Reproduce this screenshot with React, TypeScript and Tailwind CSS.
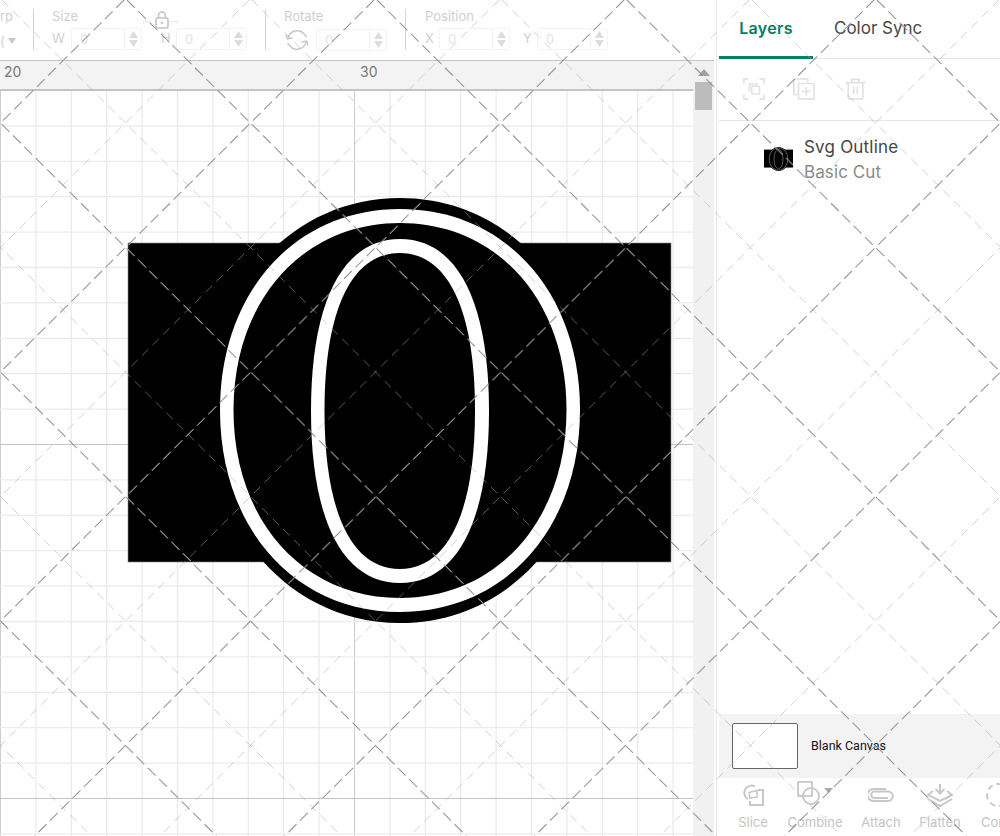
import React from "react";

function egg(l: number, t: number, r: number, b: number, k: number, my?: number) {
  const cx = (l + r) / 2;
  const cy = my ?? (t + b) / 2;
  const rx = (r - l) / 2;
  const up = cy - t;
  const dn = b - cy;
  return `M${cx} ${t}C${cx + rx * k} ${t} ${r} ${cy - up * k} ${r} ${cy}C${r} ${cy + dn * k} ${cx + rx * k} ${b} ${cx} ${b}C${cx - rx * k} ${b} ${l} ${cy + dn * k} ${l} ${cy}C${l} ${cy - up * k} ${cx - rx * k} ${t} ${cx} ${t}Z`;
}

function Logo() {
  return (
    <g>
      <rect x="128" y="243" width="543" height="319" fill="#000" stroke="#888" strokeWidth="0.6" />
      <path d={egg(209, 198, 591, 623, 0.57)} fill="#000" />
      <path d={egg(220, 209, 580, 612, 0.585, 410)} fill="#fff" />
      <path d={egg(233.5, 223, 566.5, 598, 0.585, 410)} fill="#000" />
      <path d={egg(311, 239, 489, 583, 0.64, 411)} fill="#fff" />
      <path d={egg(324.5, 253, 475, 569, 0.64, 411)} fill="#000" />
    </g>
  );
}

function ThumbLogo() {
  return (
    <g>
      <rect x="128" y="243" width="543" height="319" fill="#000" />
      <path d={egg(209, 198, 591, 623, 0.57)} fill="#000" />
      <path d={egg(227, 216, 573, 605, 0.59, 410)} fill="none" stroke="#666" strokeWidth="16" />
      <path d={egg(318, 246, 482, 576, 0.64, 411)} fill="none" stroke="#666" strokeWidth="16" />
    </g>
  );
}

function Grid() {
  const step = 35.4;
  const vs = Array.from({ length: 21 }, (_, i) => i * step);
  const hs = Array.from({ length: 22 }, (_, i) => 90 + i * step);
  return (
    <g>
      {vs.map((x, i) => (
        <line key={i} x1={x + 0.5} x2={x + 0.5} y1="90" y2="836" stroke={i % 10 === 0 ? "#cdcdcd" : "#ebebeb"} strokeWidth={i % 10 === 0 ? 1 : 1.3} />
      ))}
      {hs.map((y, i) => (
        <line key={i} x1="0" x2="693" y1={y + 0.5} y2={y + 0.5} stroke={i % 10 === 0 ? "#c4c4c4" : "#ebebeb"} strokeWidth={i % 10 === 0 ? 1 : 1.3} />
      ))}
    </g>
  );
}

function Watermark() {
  const H = 836;
  const S = 1.004;
  const lines: { x1: number; x2: number; dark: boolean }[] = [];
  Array.from({ length: 18 }, (_, i) => i - 8).forEach((k) => {
    lines.push({ x1: 127 + 125 * k, x2: 127 + 125 * k + H * S, dark: k % 2 === 0 });
  });
  Array.from({ length: 18 }, (_, i) => i).forEach((k) => {
    lines.push({ x1: 124 + 125 * k, x2: 124 + 125 * k - H * S, dark: k % 2 === 0 });
  });
  return (
    <svg className="absolute inset-0 pointer-events-none" width="1000" height="836" viewBox="0 0 1000 836">
      {lines.map((l, i) => (
        <g key={i} strokeDasharray={l.dark ? "11 5" : "9 6"} fill="none">
          {l.dark && <line x1={l.x1 + 0.7} x2={l.x2 + 0.7} y1="0" y2={H} stroke="#fff" strokeOpacity="0.8" strokeWidth="0.8" />}
          <line x1={l.x1} x2={l.x2} y1="0" y2={H} stroke={l.dark ? "#777" : "#aaa"} strokeOpacity={l.dark ? 0.75 : 0.6} strokeWidth={l.dark ? 1.1 : 0.9} />
        </g>
      ))}
    </svg>
  );
}

function Stepper() {
  return (
    <span className="flex h-full w-[17px] flex-col items-center justify-center gap-[2px] border-l border-[#f0f0f0]">
      <svg width="9" height="7" viewBox="0 0 9 7"><path d="M4.5 0L9 7H0Z" fill="#dcdcdc" /></svg>
      <svg width="9" height="7" viewBox="0 0 9 7"><path d="M4.5 7L9 0H0Z" fill="#dcdcdc" /></svg>
    </span>
  );
}

function NumInput() {
  return (
    <div className="flex h-[22px] w-[71px] items-center justify-between rounded-[3px] border border-[#f3f3f3] bg-white">
      <span className="pl-2 text-[13px] leading-none text-[#e4e4e4]">0</span>
      <Stepper />
    </div>
  );
}

function Label({ children, w }: { children: React.ReactNode; w: string }) {
  return <span className={`${w} text-[13px] leading-none text-[#cfcfcf]`}>{children}</span>;
}

function Toolbar() {
  return (
    <div className="flex h-[60px] items-start bg-white pt-[9px] font-[Inter,sans-serif]">
      <div className="flex h-[41px] w-[34px] flex-col border-r border-[#d4d4d4]">
        <span className="text-[13px] leading-[14px] text-[#cfcfcf]">rp</span>
        <span className="mt-[11px] flex h-[14px] items-center text-[13px] leading-none text-[#cfcfcf]">
          <span className="w-[8px]">(</span>
          <svg width="8" height="6" viewBox="0 0 8 6"><path d="M0 0H8L4 6Z" fill="#c8c8c8" /></svg>
        </span>
      </div>
      <div className="h-[41px] w-[232px] border-r border-[#d4d4d4] pl-[18px]">
        <div className="flex h-[18px] items-start">
          <span className="w-[91px] text-[13px] leading-[14px] text-[#cfcfcf]">Size</span>
          <svg width="35" height="20" viewBox="0 0 35 20" className="mt-[1px]" fill="none">
            <path d="M0.5 14V11.5H7M27 11.5H34.5V14" stroke="#e8e8e8" />
            <rect x="13" y="8" width="12" height="10" rx="1.5" stroke="#c4c4c4" strokeWidth="1.6" />
            <path d="M15.5 8V5.5a3.5 3.5 0 017 0V8" stroke="#c4c4c4" strokeWidth="1.6" />
            <circle cx="19" cy="13" r="1.3" fill="#c4c4c4" />
          </svg>
        </div>
        <div className="mt-[1px] flex items-center">
          <Label w="w-[19px] -translate-y-px">W</Label>
          <NumInput />
          <span className="w-[19px]" />
          <Label w="w-[15px] -translate-y-px">H</Label>
          <NumInput />
        </div>
      </div>
      <div className="h-[41px] w-[140px] border-r border-[#d4d4d4] pl-[18px]">
        <div className="h-[19px] text-[13px] leading-[14px] text-[#cfcfcf]">Rotate</div>
        <div className="flex items-center">
          <svg width="24" height="24" viewBox="0 0 24 24" className="ml-[1px] mr-[7px]" fill="none" stroke="#c8c8c8" strokeWidth="1.5">
            <path d="M3 10.5A9.2 9.2 0 0119.5 6.5L21.5 9" />
            <path d="M21 13.5A9.2 9.2 0 014.5 17.5L2.5 15" />
            <path d="M1 6.5L2.5 11L7.5 10M23 17.5L21.5 13L16.5 14" />
          </svg>
          <NumInput />
        </div>
      </div>
      <div className="h-[41px] pl-[19px]">
        <div className="h-[19px] text-[13px] leading-[14px] text-[#cfcfcf]">Position</div>
        <div className="flex items-center">
          <Label w="w-[14px] -translate-y-px">X</Label>
          <NumInput />
          <span className="w-[13px]" />
          <Label w="w-[14px] -translate-y-px">Y</Label>
          <NumInput />
        </div>
      </div>
    </div>
  );
}

function Ruler() {
  return (
    <div className="flex h-[30px] w-[693px] border-y border-y-[#c4c4c4] bg-[#f3f3f3] font-[Inter,sans-serif] text-[14px] leading-[20px] text-[#777]">
      <span className="ml-[4px] w-[356px] pt-[1px]">20</span>
      <span className="pt-[1px]">30</span>
    </div>
  );
}

function Scrollbar() {
  return (
    <div className="flex w-[21px] flex-col items-center border-t border-[#c4c4c4] bg-[#f1f1f1]">
      <svg width="12" height="7" viewBox="0 0 12 7" className="mt-[8px]"><path d="M6 0L12 7H0Z" fill="#a0a0a0" /></svg>
      <div className="mt-[6px] h-[28px] w-[17px] bg-[#bcbcbc]" />
    </div>
  );
}

function SideIcons() {
  const c = "#e2e2e2";
  return (
    <div className="flex h-[62px] items-start border-b border-[#e6e6e6] pt-[19px] pl-[24px]">
      <svg width="22" height="22" viewBox="0 0 24 24" fill="none" stroke={c} strokeWidth="1.8" className="mr-[28px]">
        <path d="M1 6V1H6M18 1H23V6M23 18V23H18M6 23H1V18" />
        <path d="M7 15V6.5H15V9" />
        <rect x="9.5" y="9" width="8.5" height="8.5" rx="1.5" />
      </svg>
      <svg width="22" height="22" viewBox="0 0 24 24" fill="none" stroke={c} strokeWidth="1.8" className="mr-[30px]">
        <path d="M5 18H1V1H16V5" />
        <rect x="6" y="6" width="17" height="17" rx="1" />
        <path d="M14.5 10V19M10 14.5H19" />
      </svg>
      <svg width="21" height="22" viewBox="0 0 22 24" fill="none" stroke={c} strokeWidth="1.8">
        <path d="M3 5V21a2 2 0 002 2H17a2 2 0 002-2V5" />
        <path d="M0 5H22M7 5V1.5H15V5" />
        <path d="M9 9V18M13 9V18" />
      </svg>
    </div>
  );
}

function BottomTool({ label, icon, w }: { label: string; icon: React.ReactNode; w: string }) {
  return (
    <div className={`${w} flex shrink-0 flex-col items-center`}>
      <div className="flex h-[30px] items-center justify-center">{icon}</div>
      <span className="mt-[4px] text-[13px] leading-[16px] whitespace-nowrap text-[#c4c4c4]">{label}</span>
    </div>
  );
}

function Panel() {
  const c = "#c8c8c8";
  return (
    <div className="flex h-[836px] w-[284px] flex-col overflow-hidden border-l border-[#e8e8e8] pl-[2px] font-[Inter,sans-serif]">
      <div className="flex h-[59px] shrink-0 border-b border-[#e4e4e4]">
        <div className="mb-[-1px] flex w-[94px] justify-center border-b-[3px] border-[#00805f] pt-[17px] text-[16px] leading-[22px] font-semibold tracking-[0.3px] text-[#00805f]">Layers</div>
        <div className="ml-[21px] pt-[17px] text-[17px] leading-[22px] text-[#484848]">Color Sync</div>
      </div>
      <SideIcons />
      <div className="flex flex-1 items-start pt-[14px] pl-[45px]">
        <svg width="29" height="24" viewBox="128 197 543 426" className="mt-[12px] mr-[11px]" preserveAspectRatio="none"><ThumbLogo /></svg>
        <div>
          <div className="text-[17px] leading-[25px] tracking-[0.2px] text-[#444]">Svg Outline</div>
          <div className="text-[17px] leading-[24px] tracking-[0.1px] text-[#8a8a8a]">Basic Cut</div>
        </div>
      </div>
      <div className="flex h-[64px] shrink-0 items-center bg-[#f3f3f3] pl-[13px]">
        <div className="h-[46px] w-[66px] rounded-[2px] border border-[#666] bg-white" />
        <span className="ml-[13px] pt-[1px] font-[Roboto,sans-serif] text-[12.5px] text-[#111]">Blank Canvas</span>
      </div>
      <div className="flex h-[58px] shrink-0 pt-[2px] pl-[12px]">
        <BottomTool
          w="w-[44px]"
          label="Slice"
          icon={
            <svg width="26" height="26" viewBox="0 0 26 26" fill="none" stroke={c} strokeWidth="2">
              <path d="M8 17A6.5 6.5 0 1115 4.5" />
              <path d="M9 10.5L17 8.5V15L10 16Z" strokeWidth="1.6" />
              <path d="M18 8H23V23H10V19" />
            </svg>
          }
        />
        <BottomTool
          w="w-[80px]"
          label="Combine"
          icon={
            <svg width="42" height="28" viewBox="0 0 42 28" fill="none" stroke={c} strokeWidth="1.8" className="ml-[6px]">
              <rect x="1" y="1" width="14" height="14" />
              <circle cx="14" cy="15" r="8" />
              <path d="M27 7H36L31.5 12Z" fill="#a8a8a8" stroke="none" />
            </svg>
          }
        />
        <BottomTool
          w="w-[52px]"
          label="Attach"
          icon={
            <svg width="26" height="14" viewBox="0 0 26 14" fill="none" stroke={c} strokeWidth="2">
              <path d="M20 10H6.5a3.2 3.2 0 010-6.5H20a3.2 3.2 0 010 9.5H5.5A4.5 4.5 0 015.5 1H18" />
            </svg>
          }
        />
        <BottomTool
          w="w-[66px]"
          label="Flatten"
          icon={
            <svg width="26" height="24" viewBox="0 0 26 24" fill="none" stroke={c} strokeWidth="2">
              <path d="M13 1V10M8.5 6L13 10.5L17.5 6" />
              <path d="M6 8L1 12L13 18L25 12L20 8" />
              <path d="M1 16L13 23L25 16" />
            </svg>
          }
        />
        <div className="flex w-[60px] shrink-0 flex-col items-start pl-[8px]">
          <div className="flex h-[30px] items-center">
            <svg width="26" height="26" viewBox="0 0 26 26" fill="none" stroke={c} strokeWidth="2" strokeDasharray="6 4" className="ml-[4px]">
              <circle cx="13" cy="13" r="11" />
            </svg>
          </div>
          <span className="mt-[4px] text-[13px] leading-[16px] whitespace-nowrap text-[#c4c4c4]">Contour</span>
        </div>
      </div>
    </div>
  );
}

export default function App() {
  return (
    <div className="relative flex h-[836px] w-[1000px] overflow-hidden bg-white">
      <div className="flex w-[716px] shrink-0 flex-col">
        <Toolbar />
        <div className="flex flex-1">
          <div className="flex w-[693px] flex-col">
            <Ruler />
            <svg width="693" height="746" viewBox="0 90 693 746" className="block">
              <Grid />
              <Logo />
            </svg>
          </div>
          <Scrollbar />
        </div>
      </div>
      <Panel />
      <Watermark />
    </div>
  );
}
